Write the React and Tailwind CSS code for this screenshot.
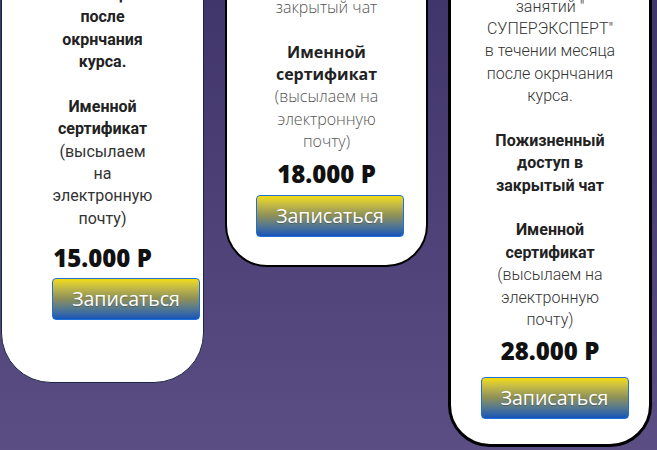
const roboto = "font-['Roboto','Liberation_Sans',sans-serif]";
const openSans = "font-['Open_Sans','Liberation_Sans',sans-serif]";

function Line({ children, className = "" }) {
  return <div className={`h-[22.4px] whitespace-nowrap ${className}`}>{children}</div>;
}

function Blank() {
  return <div className="h-[22.4px]" />;
}

function Price({ children, className = "" }) {
  return (
    <div className={`font-['Open_Sans','Liberation_Sans',sans-serif] text-[24px] leading-[33.6px] font-extrabold text-[#111] whitespace-nowrap ${className}`}>
      {children}
    </div>
  );
}

function SignUp({ className = "" }) {
  return (
    <button
      className={`w-[148px] h-[42px] shrink-0 rounded-[4px] border border-[#1f6fd8] bg-linear-to-b from-[#f2dc00] via-[#8c8f58] to-[#1553b8] text-white text-[19.5px] leading-none font-['Open_Sans','Liberation_Sans',sans-serif] [text-shadow:0_1px_1px_rgba(0,0,0,0.25)] flex items-center justify-center ${className}`}
    >
      Записаться
    </button>
  );
}

export default function App() {
  return (
    <div className="w-[657px] h-[450px] overflow-hidden bg-linear-to-b from-[#41366b] to-[#5a4e84] flex items-start pl-px">
      {/* Базовый тариф */}
      <div className={`w-[203px] shrink-0 mt-[-59.5px] bg-white border border-[#1d2640] rounded-[50px] pt-[20px] pb-[62px] flex flex-col items-center text-center text-[16px] leading-[22.4px] ${roboto}`}>
        <div className="font-bold text-[#222] flex flex-col items-center">
          <Line>в течении</Line>
          <Line>месяца</Line>
          <Line>после</Line>
          <Line>окрнчания</Line>
          <Line>курса.</Line>
        </div>
        <Blank />
        <div className="flex flex-col items-center">
          <Line className="font-bold text-[#222]">Именной</Line>
          <Line className="font-bold text-[#222]">сертификат</Line>
          <Line className="text-[#333]">(высылаем</Line>
          <Line className="text-[#333]">на</Line>
          <Line className="text-[#333]">электронную</Line>
          <Line className="text-[#333]">почту)</Line>
        </div>
        <Price className="mt-[10.7px]">15.000 Р</Price>
        <SignUp className="mt-[3.4px] ml-[47px]" />
      </div>

      {/* Расширенный тариф */}
      <div className={`w-[203px] shrink-0 ml-[21px] mt-[-48.6px] bg-white border-2 border-black rounded-[42px] pt-[20px] pb-[28px] flex flex-col items-center text-center text-[16px] leading-[22.4px] ${openSans}`}>
        <div className="font-light text-[#555] flex flex-col items-center">
          <Line>доступ в</Line>
          <Line>закрытый чат</Line>
        </div>
        <Blank />
        <div className="flex flex-col items-center">
          <Line className="font-bold text-[#222]">Именной</Line>
          <Line className="font-bold text-[#222]">сертификат</Line>
          <Line className="font-light text-[#555]">(высылаем на</Line>
          <Line className="font-light text-[#555]">электронную</Line>
          <Line className="font-light text-[#555]">почту)</Line>
        </div>
        <Price className="mt-[4.4px]">18.000 Р</Price>
        <SignUp className="mt-[4.4px] ml-[7px]" />
      </div>

      {/* Премиум тариф */}
      <div className={`w-[204px] shrink-0 ml-[20px] mt-[-49.9px] bg-white border-[3px] border-black rounded-[42px] pt-[20px] pb-[25px] flex flex-col items-center text-center text-[16px] leading-[22.4px] ${roboto}`}>
        <div className="font-light text-[#333] flex flex-col items-center">
          <Line>Доступ к записям</Line>
          <Line>занятий "</Line>
          <Line>СУПЕРЭКСПЕРТ"</Line>
          <Line>в течении месяца</Line>
          <Line>после окрнчания</Line>
          <Line>курса.</Line>
        </div>
        <Blank />
        <div className="font-bold text-[#222] flex flex-col items-center">
          <Line>Пожизненный</Line>
          <Line>доступ в</Line>
          <Line>закрытый чат</Line>
        </div>
        <Blank />
        <div className="flex flex-col items-center">
          <Line className="font-bold text-[#222]">Именной</Line>
          <Line className="font-bold text-[#222]">сертификат</Line>
          <Line className="font-light text-[#333]">(высылаем на</Line>
          <Line className="font-light text-[#333]">электронную</Line>
          <Line className="font-light text-[#333]">почту)</Line>
        </div>
        <Price className="mt-[2.5px]">28.000 Р</Price>
        <SignUp className="mt-[9.4px] ml-[9px]" />
      </div>
    </div>
  );
}
